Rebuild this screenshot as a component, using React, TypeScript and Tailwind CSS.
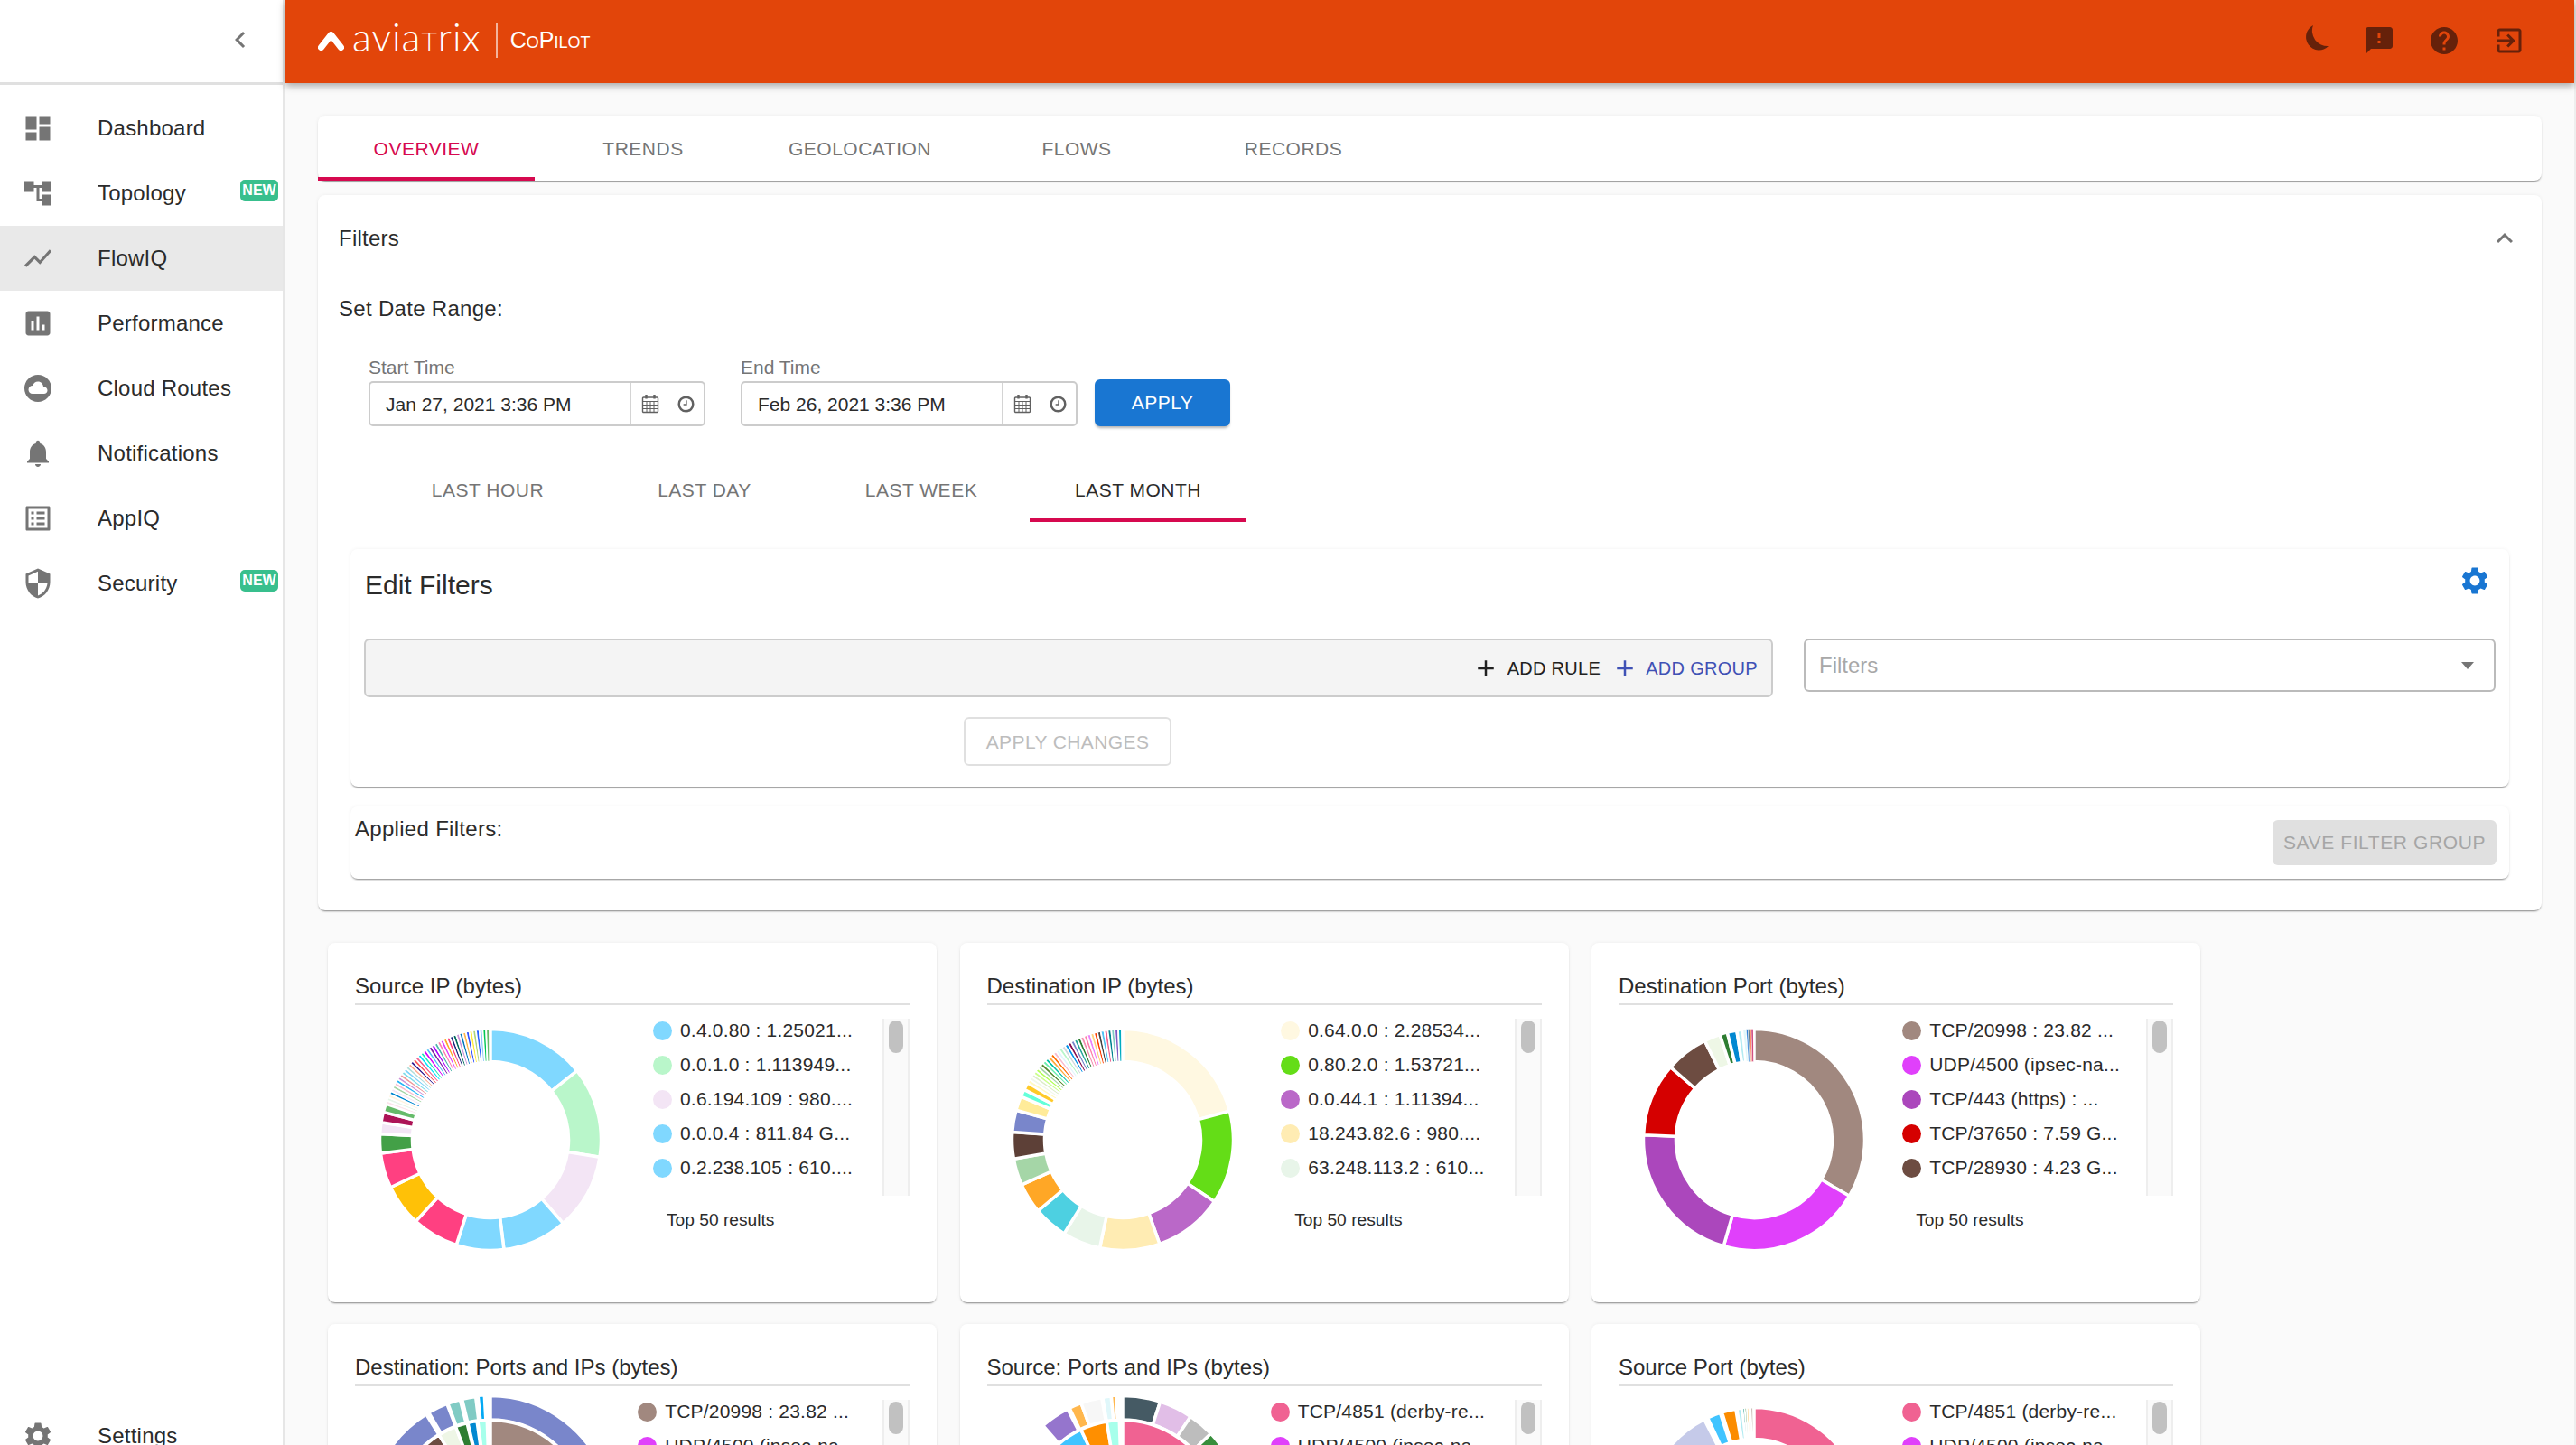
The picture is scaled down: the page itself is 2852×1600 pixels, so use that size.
const ICON = {
  dashboard: "M3 13h8V3H3v10zm0 8h8v-6H3v6zm10 0h8V11h-8v10zm0-18v6h8V3h-8z",
  topology: "M22 11V3h-7v3H9V3H2v8h7V8h2v10h4v3h7v-8h-7v3h-2V8h2v3z",
  flow: "M3.5 18.49l6-6.01 4 4L22 6.92l-1.41-1.41-7.09 7.97-4-4L2 16.99z",
  performance: "M19 3H5c-1.1 0-2 .9-2 2v14c0 1.1.9 2 2 2h14c1.1 0 2-.9 2-2V5c0-1.1-.9-2-2-2zM9 17H7v-7h2v7zm4 0h-2V7h2v10zm4 0h-2v-4h2v4z",
  cloud: "M12 2C6.48 2 2 6.48 2 12s4.48 10 10 10 10-4.48 10-10S17.52 2 12 2zm4.5 14H8c-1.66 0-3-1.34-3-3s1.34-3 3-3l.14.01C8.58 8.28 10.13 7 12 7c2.21 0 4 1.79 4 4h.5c1.38 0 2.5 1.12 2.5 2.5S17.88 16 16.5 16z",
  bell: "M12 22c1.1 0 2-.9 2-2h-4c0 1.1.89 2 2 2zm6-6v-5c0-3.07-1.64-5.64-4.5-6.32V4c0-.83-.67-1.5-1.5-1.5s-1.5.67-1.5 1.5v.68C7.63 5.36 6 7.92 6 11v5l-2 2v1h16v-1l-2-2z",
  list: "M19 5v14H5V5h14m1.1-2H3.9c-.5 0-.9.4-.9.9v16.2c0 .4.4.9.9.9h16.2c.4 0 .9-.5.9-.9V3.9c0-.5-.5-.9-.9-.9zM11 7h6v2h-6V7zm0 4h6v2h-6v-2zm0 4h6v2h-6zM7 7h2v2H7zm0 4h2v2H7zm0 4h2v2H7z",
  shield: "M12 1L3 5v6c0 5.55 3.84 10.74 9 12 5.16-1.26 9-6.45 9-12V5l-9-4zm0 10.99h7c-.53 4.12-3.28 7.79-7 8.94V12H5V6.3l7-3.11v8.8z",
  gear: "M19.14 12.94c.04-.3.06-.61.06-.94 0-.32-.02-.64-.07-.94l2.03-1.58c.18-.14.23-.41.12-.61l-1.92-3.32c-.12-.22-.37-.29-.59-.22l-2.39.96c-.5-.38-1.03-.7-1.62-.94l-.36-2.54c-.04-.24-.24-.41-.48-.41h-3.84c-.24 0-.43.17-.47.41l-.36 2.54c-.59.24-1.13.57-1.62.94l-2.39-.96c-.22-.08-.47 0-.59.22L2.74 8.87c-.12.21-.08.47.12.61l2.03 1.58c-.05.3-.09.63-.09.94s.02.64.07.94l-2.03 1.58c-.18.14-.23.41-.12.61l1.92 3.32c.12.22.37.29.59.22l2.39-.96c.5.38 1.03.7 1.62.94l.36 2.54c.05.24.24.41.48.41h3.84c.24 0 .44-.17.47-.41l.36-2.54c.59-.24 1.13-.56 1.62-.94l2.39.96c.22.08.47 0 .59-.22l1.92-3.32c.12-.22.07-.47-.12-.61l-2.01-1.58zM12 15.6c-1.98 0-3.6-1.62-3.6-3.6s1.62-3.6 3.6-3.6 3.6 1.62 3.6 3.6-1.62 3.6-3.6 3.6z",
  feedback: "M20 2H4c-1.1 0-1.99.9-1.99 2L2 22l4-4h14c1.1 0 2-.9 2-2V4c0-1.1-.9-2-2-2zm-7 12h-2v-2h2v2zm0-4h-2V6h2v4z",
  help: "M12 2C6.48 2 2 6.48 2 12s4.48 10 10 10 10-4.48 10-10S17.52 2 12 2zm1 17h-2v-2h2v2zm2.07-7.75l-.9.92C13.45 12.9 13 13.5 13 15h-2v-.5c0-1.1.45-2.1 1.17-2.83l1.24-1.26c.37-.36.59-.86.59-1.41 0-1.1-.9-2-2-2s-2 .9-2 2H8c0-2.21 1.79-4 4-4s4 1.79 4 4c0 .88-.36 1.68-.93 2.25z",
  exit: "M10.09 15.59L11.5 17l5-5-5-5-1.41 1.41L12.67 11H3v2h9.67l-2.58 2.59zM19 3H5c-1.11 0-2 .9-2 2v4h2V5h14v14H5v-4H3v4c0 1.1.89 2 2 2h14c1.1 0 2-.9 2-2V5c0-1.1-.9-2-2-2z",
  chevronLeft: "M15.41 7.41L14 6l-6 6 6 6 1.41-1.41L10.83 12z",
  chevronUp: "M12 8l-6 6 1.41 1.41L12 10.83l4.59 4.58L18 14z",
  plus: "M19 13h-6v6h-2v-6H5v-2h6V5h2v6h6v2z",
};

const Icon = ({ d, className }: { d: string; className: string }) => (
  <svg viewBox="0 0 24 24" fill="currentColor" className={className}>
    <path d={d} />
  </svg>
);

const CalendarIcon = () => (
  <svg viewBox="0 0 20 22" className="w-[20px] h-[22px] text-[#616161]" fill="none" stroke="currentColor" strokeWidth="1.4">
    <rect x="1.5" y="4" width="17" height="16.5" rx="1" />
    <path d="M1.5 8.5h17M1.5 12.5h17M1.5 16.5h17M6 8.5v12M10 8.5v12M14 8.5v12" strokeWidth="1" />
    <path d="M5.5 1v4.5M14.5 1v4.5" strokeWidth="2.4" />
  </svg>
);

const ClockIcon = () => (
  <svg viewBox="0 0 20 20" className="w-[19px] h-[19px] text-[#616161]" fill="none" stroke="currentColor">
    <circle cx="10" cy="10" r="8.2" strokeWidth="2.6" />
    <path d="M10.5 5.5v5H7" strokeWidth="1.4" />
  </svg>
);

// donut helpers, angles are degrees clockwise from the top
type Seg = [number, number, string];

const stripes = (from: number, to: number, colors: string[]): Seg[] => {
  const step = (to - from) / colors.length;
  return colors.map((c, i): Seg => [from + i * step, from + (i + 1) * step, c]);
};

const pt = (r: number, a: number) => {
  const t = (a * Math.PI) / 180;
  return `${(r * Math.sin(t)).toFixed(2)} ${(-r * Math.cos(t)).toFixed(2)}`;
};

const arc = (r0: number, r1: number, a: number, b: number) => {
  const large = b - a > 180 ? 1 : 0;
  return `M${pt(r1, a)}A${r1} ${r1} 0 ${large} 1 ${pt(r1, b)}L${pt(r0, b)}A${r0} ${r0} 0 ${large} 0 ${pt(r0, a)}Z`;
};

const gapFor = (span: number) => (span < 1 ? 0.5 : span < 2.5 ? 1.8 : 3.5);

type Ring = { r0: number; r1: number; segs: Seg[] };

const Donut = ({ rings, className }: { rings: Ring[]; className: string }) => (
  <svg viewBox="-140 -140 280 280" className={`w-[280px] h-[280px] shrink-0 ml-[10px] ${className}`}>
    {rings.map((ring) =>
      ring.segs.map(([a, b, c], i) => (
        <path key={`${ring.r1}-${i}`} d={arc(ring.r0, ring.r1, a, b)} fill={c} stroke="#fff" strokeWidth={gapFor(b - a)} />
      ))
    )}
  </svg>
);

const sourceStripes = [
  "#fce4ec", "#e8f5e9", "#fff3e0", "#0288d1", "#f3e5f5", "#a5d6a7", "#f8bbd0", "#29b6f6", "#ce93d8", "#ef9a9a",
  "#80deea", "#81d4fa", "#b2dfdb", "#ffab91", "#311b92", "#ff5252", "#f06292", "#00e5ff", "#1de9b6", "#d500f9",
  "#4fc3f7", "#7b1fa2", "#aa00ff", "#4db6ac", "#ff80ab", "#e040fb", "#ffa726", "#ff4081", "#1a237e", "#00695c",
  "#ce93d8", "#0277bd", "#ffb74d", "#304ffe", "#ffeb3b", "#aed581", "#2962ff", "#90caf9", "#00c853", "#66bb6a",
];

const destStripes = [
  "#fff9c4", "#f1f8e9", "#dcedc8", "#ccff90", "#b2ff59", "#a5d6a7", "#558b2f", "#69f0ae", "#00bfa5", "#ffab40",
  "#ff6d00", "#f8bbd0", "#e1f5fe", "#b9f6ca", "#cfd8dc", "#0091ea", "#880e4f", "#7986cb", "#26a69a", "#2e7d32",
  "#f48fb1", "#ff80ab", "#ea80fc", "#ffd180", "#ff3d00", "#424242", "#4fc3f7", "#f06292", "#00838f", "#80cbc4",
  "#7e57c2", "#00acc1",
];

const sourceIp: Ring[] = [
  {
    r0: 86.5,
    r1: 122.5,
    segs: [
      [0, 51.5, "#80d8ff"],
      [51.5, 99, "#b9f6ca"],
      [99, 139, "#f3e5f5"],
      [139, 173, "#80d8ff"],
      [173, 198, "#80d8ff"],
      [198, 222.5, "#ff4081"],
      [222.5, 244.5, "#ffc107"],
      [244.5, 263, "#ff4081"],
      [263, 273, "#43a047"],
      [273, 279, "#f3e5f5"],
      [279, 284.5, "#ad1457"],
      [284.5, 289, "#66bb6a"],
      ...stripes(289, 359.5, sourceStripes),
    ],
  },
];

const destIp: Ring[] = [
  {
    r0: 86.5,
    r1: 122.5,
    segs: [
      [0, 75, "#fff8e1"],
      [75, 124, "#64dd17"],
      [124, 160.5, "#ba68c8"],
      [160.5, 192, "#ffecb3"],
      [192, 212, "#e8f5e9"],
      [212, 230, "#4dd0e1"],
      [230, 246, "#ffa726"],
      [246, 260, "#a5d6a7"],
      [260, 274, "#5d4037"],
      [274, 285.5, "#7986cb"],
      [285.5, 293, "#ffeb99"],
      [293, 297, "#64ffda"],
      [297, 301, "#ffca28"],
      ...stripes(301, 359.5, destStripes),
    ],
  },
];

const destPort: Ring[] = [
  {
    r0: 86.5,
    r1: 122.5,
    segs: [
      [0, 120.6, "#a1887f"],
      [120.6, 196, "#e040fb"],
      [196, 272.5, "#ab47bc"],
      [272.5, 311, "#d50000"],
      [311, 333.5, "#6d4c41"],
      [333.5, 342, "#eef7e6"],
      [342, 346, "#2e7d32"],
      [346, 351, "#0288d1"],
      [351, 354, "#b2ebf2"],
      [354, 356, "#e0f7fa"],
      ...stripes(356, 359.5, ["#1976d2", "#546e7a", "#ff7043", "#c2185b"]),
    ],
  },
];

const destPortsIps: Ring[] = [
  {
    r0: 108,
    r1: 134.5,
    segs: [
      [0, 150, "#7986cb"],
      [270, 328, "#7986cb"],
      [329.5, 339, "#7986cb"],
      [339.5, 345.5, "#80cbc4"],
      [346.5, 353, "#80cbc4"],
      [354.5, 356.8, "#03a9f4"],
    ],
  },
  {
    r0: 60,
    r1: 107.5,
    segs: [
      [0, 140, "#a1887f"],
      [280, 328, "#6d4c41"],
      [328, 339, "#eef6e6"],
      [339, 346, "#2e7d32"],
      [346.5, 352, "#0288d1"],
      [352.5, 358, "#a7ffeb"],
    ],
  },
];

const sourcePortsIps: Ring[] = [
  {
    r0: 108,
    r1: 134.5,
    segs: [
      [0, 18, "#455a64"],
      [18, 34, "#e1bee7"],
      [34, 46.5, "#bdbdbd"],
      [46.5, 57, "#388e3c"],
      [305, 308, "#4e342e"],
      [319, 333, "#9575cd"],
      [334, 340, "#ffb74d"],
      [340, 350, "#f7f7f7"],
      [350.5, 354.5, "#e0f7fa"],
      [355, 356.5, "#ffb74d"],
    ],
  },
  {
    r0: 60,
    r1: 107.5,
    segs: [
      [0, 120, "#f06292"],
      [300, 334.5, "#40c4ff"],
      [334.5, 350.5, "#ff8f00"],
      [350.5, 358, "#a7ffeb"],
    ],
  },
];

const sourcePort: Ring[] = [
  {
    r0: 86.5,
    r1: 121.5,
    segs: [
      [0, 130, "#f06292"],
      [290, 333, "#c5cae9"],
      [335, 342, "#40c4ff"],
      [343, 350.4, "#fb8c00"],
      [351, 353.8, "#b2ebf2"],
      ...stripes(354, 359.5, ["#00897b", "#388e3c", "#ffa000", "#90a4ae", "#8d6e63"]),
    ],
  },
];

const charts = [
  {
    title: "Source IP (bytes)",
    rings: sourceIp,
    offset: "-mt-[6px]",
    trackGap: "ml-[33px]",
    legend: [
      ["#80d8ff", "0.4.0.80 : 1.25021..."],
      ["#b9f6ca", "0.0.1.0 : 1.113949..."],
      ["#f3e5f5", "0.6.194.109 : 980...."],
      ["#80d8ff", "0.0.0.4 : 811.84 G..."],
      ["#80d8ff", "0.2.238.105 : 610...."],
    ],
  },
  {
    title: "Destination IP (bytes)",
    rings: destIp,
    offset: "-mt-[6px]",
    trackGap: "ml-[33px]",
    legend: [
      ["#fff8e1", "0.64.0.0 : 2.28534..."],
      ["#64dd17", "0.80.2.0 : 1.53721..."],
      ["#ba68c8", "0.0.44.1 : 1.11394..."],
      ["#ffecb3", "18.243.82.6 : 980...."],
      ["#e8f5e9", "63.248.113.2 : 610..."],
    ],
  },
  {
    title: "Destination Port (bytes)",
    rings: destPort,
    offset: "-mt-[6px]",
    trackGap: "ml-[29px]",
    legend: [
      ["#a1887f", "TCP/20998 : 23.82 ..."],
      ["#e040fb", "UDP/4500 (ipsec-na..."],
      ["#ab47bc", "TCP/443 (https) : ..."],
      ["#d50000", "TCP/37650 : 7.59 G..."],
      ["#6d4c41", "TCP/28930 : 4.23 G..."],
    ],
  },
  {
    title: "Destination: Ports and IPs (bytes)",
    rings: destPortsIps,
    offset: "-mt-[10px]",
    trackGap: "ml-[30px]",
    legend: [
      ["#a1887f", "TCP/20998 : 23.82 ..."],
      ["#e040fb", "UDP/4500 (ipsec-na..."],
    ],
  },
  {
    title: "Source: Ports and IPs (bytes)",
    rings: sourcePortsIps,
    offset: "-mt-[10px]",
    trackGap: "ml-[29px]",
    legend: [
      ["#f06292", "TCP/4851 (derby-re..."],
      ["#e040fb", "UDP/4500 (ipsec-na..."],
    ],
  },
  {
    title: "Source Port (bytes)",
    rings: sourcePort,
    offset: "-mt-[10px]",
    trackGap: "ml-[29px]",
    legend: [
      ["#f06292", "TCP/4851 (derby-re..."],
      ["#e040fb", "UDP/4500 (ipsec-na..."],
    ],
  },
];

const navItems = [
  { label: "Dashboard", icon: ICON.dashboard },
  { label: "Topology", icon: ICON.topology, isNew: true },
  { label: "FlowIQ", icon: ICON.flow, active: true },
  { label: "Performance", icon: ICON.performance },
  { label: "Cloud Routes", icon: ICON.cloud },
  { label: "Notifications", icon: ICON.bell },
  { label: "AppIQ", icon: ICON.list },
  { label: "Security", icon: ICON.shield, isNew: true },
];

const NavRow = ({ label, icon, active, isNew }: { label: string; icon: string; active?: boolean; isNew?: boolean }) => (
  <div className={`flex items-center h-[72px] shrink-0 ${active ? "bg-[#e9e9e9]" : ""}`}>
    <Icon d={icon} className="w-[36px] h-[36px] ml-[24px] shrink-0 text-[#757575]" />
    <span className="ml-[48px] text-[24px] tracking-[0.225px] text-[#2b2b2b]">{label}</span>
    {isNew && (
      <span className="ml-auto mr-[5px] -mt-[6px] w-[42px] h-[24px] rounded-[5px] bg-[#38bf8d] text-white text-[16px] font-bold leading-[24px] text-center">
        NEW
      </span>
    )}
  </div>
);

const DateField = ({ label, value }: { label: string; value: string }) => (
  <div className="w-[373px]">
    <div className="text-[21px] leading-[24px] mb-[3px] text-[#757575]">{label}</div>
    <div className="flex items-center h-[50px] rounded-[5px] border-2 border-[#cccccc] bg-white">
      <span className="w-[287px] pl-[17px] pt-[2px] text-[21px] text-[#2b2b2b]">{value}</span>
      <div className="flex flex-1 items-center justify-between h-full pl-[11px] pr-[10px] border-l-2 border-[#d4d4d4]">
        <CalendarIcon />
        <ClockIcon />
      </div>
    </div>
  </div>
);

const ChartCard = ({ title, rings, legend, offset, trackGap }: (typeof charts)[number]) => (
  <div className="h-[398px] rounded-[8px] bg-white px-[30px] pt-[33px] shadow-[0_2px_2px_-1px_rgba(0,0,0,0.45),0_0_4px_rgba(0,0,0,0.06)]">
    <div className="h-[34px] border-b-2 border-[#e0e0e0] box-content text-[24px] leading-[30px] text-[#2b2b2b] whitespace-nowrap">
      {title}
    </div>
    <div className="flex mt-[15px]">
      <Donut rings={rings} className={offset} />
      <div className="ml-auto">
        <div className="flex h-[196px]">
          <div className="-mt-[6px]">
            {legend.map(([color, text]) => (
              <div key={text} className="flex items-center h-[38px] gap-[9px] text-[21px] tracking-[0.2px] text-[#2b2b2b] whitespace-nowrap">
                <span className="w-[21px] h-[21px] rounded-full shrink-0" style={{ backgroundColor: color }} />
                {text}
              </div>
            ))}
          </div>
          <div className={`w-[30px] border-x-2 border-[#eeeeee] bg-[#fafafa] pt-[2px] px-[5px] ${trackGap}`}>
            <div className="w-[16px] h-[36px] rounded-full bg-[#c1c1c1]" />
          </div>
        </div>
        <div className="mt-[15px] ml-[15px] text-[19.2px] leading-[24px] text-[#2b2b2b]">Top 50 results</div>
      </div>
    </div>
  </div>
);

const App = () => {
  return (
    <div className="flex h-[1600px] w-full overflow-hidden bg-white font-['Liberation_Sans',Arial,sans-serif]">
      {/* side nav */}
      <aside className="flex flex-col w-[316px] shrink-0 border-r-[3px] border-[#e6e6e6] bg-white">
        <div className="flex items-center justify-end h-[94px] shrink-0 pr-[29px] pb-[4px] border-b-[3px] border-[#e0e0e0]">
          <Icon d={ICON.chevronLeft} className="w-[36px] h-[36px] text-[#757575]" />
        </div>
        <nav className="flex flex-col pt-[12px]">
          {navItems.map((item) => (
            <NavRow key={item.label} {...item} />
          ))}
          <div className="mt-[872px]">
            <NavRow label="Settings" icon={ICON.gear} />
          </div>
        </nav>
      </aside>

      <div className="flex flex-col flex-1 min-w-0 border-r-2 border-[#eeeeee]">
        {/* top bar */}
        <header className="relative z-10 flex items-center h-[92px] shrink-0 bg-[#e2450a] shadow-[0_3px_8px_rgba(0,0,0,0.35)] pl-[36px] pb-[3px]">
          <svg viewBox="0 0 29 22" className="w-[29px] h-[22px]" fill="none" stroke="#fff" strokeWidth="7" strokeLinecap="round" strokeLinejoin="round">
            <path d="M3.5 18.5L14.5 4.5L25.5 18.5" />
          </svg>
          <span className="ml-[9px] font-['Lato',sans-serif] font-light text-[43px] leading-none tracking-[1px] text-white -mt-[8px]">
            avia<span className="[font-variant:small-caps]">t</span>rix
          </span>
          <span className="w-[2px] h-[39px] ml-[16px] bg-white/60" />
          <span className="ml-[14px] text-[25px] leading-none text-white [font-variant:small-caps]">CoPilot</span>
          <div className="flex items-center ml-auto mr-[54px] gap-[36px] text-[#66210a]">
            <svg viewBox="0 0 28 29" fill="currentColor" className="w-[28px] h-[29px] -mt-[5px] mr-[2px]">
              <path d="M11 0A14.5 14.5 0 1 0 28 23A17 17 0 0 1 11 0Z" />
            </svg>
            <Icon d={ICON.feedback} className="w-[36px] h-[36px]" />
            <Icon d={ICON.help} className="w-[36px] h-[36px]" />
            <Icon d={ICON.exit} className="w-[36px] h-[36px]" />
          </div>
        </header>

        <main className="flex-1 min-h-0 overflow-hidden bg-[#fafafa] pt-[36px] pl-[36px] pr-[36px]">
          {/* page tabs */}
          <div className="flex h-[72px] rounded-[8px] bg-white shadow-[0_2px_2px_-1px_rgba(0,0,0,0.45),0_0_4px_rgba(0,0,0,0.06)]">
            {["OVERVIEW", "TRENDS", "GEOLOCATION", "FLOWS", "RECORDS"].map((tab, i) => (
              <div
                key={tab}
                className={`flex items-center justify-center w-[240px] text-[21px] tracking-[0.5px] ${
                  i === 0 ? "text-[#d6094f] border-b-[4px] border-[#d6094f] pt-[5px]" : "text-[#757575] pt-[1px]"
                }`}
              >
                {tab}
              </div>
            ))}
          </div>

          {/* filters */}
          <div className="h-[792px] mt-[16px] rounded-[8px] bg-white shadow-[0_2px_2px_-1px_rgba(0,0,0,0.45),0_0_4px_rgba(0,0,0,0.06)] px-[23px]">
            <div className="flex items-center justify-between h-[96px] text-[24px] tracking-[0.225px] text-[#2b2b2b]">
              Filters
              <Icon d={ICON.chevronUp} className="w-[36px] h-[36px] text-[#757575]" />
            </div>
            <div className="mt-[15px] text-[24px] tracking-[0.3px] leading-[30px] text-[#2b2b2b]">Set Date Range:</div>

            <div className="flex items-end mt-[38px] ml-[33px]">
              <DateField label="Start Time" value="Jan 27, 2021 3:36 PM" />
              <div className="ml-[39px]">
                <DateField label="End Time" value="Feb 26, 2021 3:36 PM" />
              </div>
              <button className="w-[150px] h-[52px] ml-[19px] rounded-[6px] bg-[#1976d2] text-white text-[21px] tracking-[0.5px] shadow-[0_3px_3px_-1px_rgba(0,0,0,0.3)]">
                APPLY
              </button>
            </div>

            <div className="flex mt-[34px] ml-[45px]">
              {["LAST HOUR", "LAST DAY", "LAST WEEK", "LAST MONTH"].map((tab, i) => (
                <div
                  key={tab}
                  className={`flex items-center justify-center w-[240px] h-[72px] text-[21px] tracking-[0.5px] ${
                    i === 3 ? "text-[#2b2b2b] border-b-[4px] border-[#d6094f] pt-[5px]" : "text-[#757575] pt-[1px]"
                  }`}
                >
                  {tab}
                </div>
              ))}
            </div>

            <div className="h-[263px] mt-[30px] mx-[13px] rounded-[8px] bg-white px-[15px] shadow-[0_2px_2px_-1px_rgba(0,0,0,0.45),0_0_4px_rgba(0,0,0,0.06)]">
              <div className="flex items-center justify-between h-[78px] pl-[1px] pr-[5px] text-[30px] text-[#2b2b2b]">
                Edit Filters
                <Icon d={ICON.gear} className="w-[36px] h-[36px] -mt-[8px] text-[#1976d2]" />
              </div>
              <div className="flex items-start gap-[34px] mt-[21px]">
                <div className="flex items-center justify-end w-[1560px] h-[65px] rounded-[6px] border-2 border-[#cccccc] bg-[#f4f4f4] pr-[15px] text-[20px] tracking-[0.3px]">
                  <Icon d={ICON.plus} className="w-[30px] h-[30px] mr-[9px] text-[#212121]" />
                  <span className="text-[#212121]">ADD RULE</span>
                  <Icon d={ICON.plus} className="w-[30px] h-[30px] ml-[12px] mr-[8px] text-[#3f51b5]" />
                  <span className="text-[#3f51b5]">ADD GROUP</span>
                </div>
                <div className="flex flex-1 items-center justify-between h-[59px] rounded-[6px] border-2 border-[#bbbbbb] pl-[15px] pr-[22px] text-[24px] text-[#a8a8a8]">
                  Filters
                  <svg viewBox="0 0 14 8" className="w-[14px] h-[8px] text-[#757575]" fill="currentColor">
                    <path d="M0 0h14L7 8z" />
                  </svg>
                </div>
              </div>
              <button className="block w-[230px] h-[54px] mt-[22px] ml-[664px] pt-[2px] rounded-[6px] border-2 border-[#e0e0e0] text-[21px] tracking-[0.4px] text-[#bdbdbd]">
                APPLY CHANGES
              </button>
            </div>

            <div className="flex items-start justify-between h-[80px] mt-[22px] mx-[13px] rounded-[8px] bg-white pl-[5px] pr-[14px] shadow-[0_2px_2px_-1px_rgba(0,0,0,0.45),0_0_4px_rgba(0,0,0,0.06)]">
              <span className="pt-[10px] text-[24px] tracking-[0.3px] leading-[30px] text-[#2b2b2b]">Applied Filters:</span>
              <button className="w-[248px] h-[50px] mt-[15px] rounded-[6px] bg-[#e0e0e0] text-[21px] tracking-[0.6px] text-[#a6a6a6] whitespace-nowrap">
                SAVE FILTER GROUP
              </button>
            </div>
          </div>

          {/* charts */}
          <div className="grid grid-cols-[repeat(3,674px)] gap-x-[25.5px] gap-y-[24px] mt-[36px] ml-[11px]">
            {charts.map((chart) => (
              <ChartCard key={chart.title} {...chart} />
            ))}
          </div>
        </main>
      </div>
    </div>
  );
};

export default App;
